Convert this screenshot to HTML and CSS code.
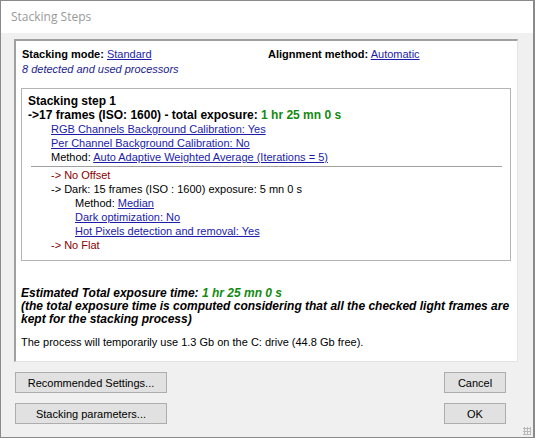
FILE: index.html
```html
<!DOCTYPE html>
<html lang="en">
<head>
    <meta charset="UTF-8">
    <title>Stacking Steps</title>
    <link rel="stylesheet" href="styles.css">
</head>
<body>
<div class="window">
    <header class="titlebar">Stacking Steps</header>

    <div class="client">
        <section class="panel">
            <div class="top-row">
                <div class="col-left">
                    <div><b>Stacking mode:</b> <a href="#">Standard</a></div>
                    <div class="procs">8 detected and used processors</div>
                </div>
                <div class="col-right">
                    <b>Alignment method:</b> <a href="#">Automatic</a>
                </div>
            </div>

            <article class="step">
                <h3>Stacking step 1</h3>
                <div class="frames">-&gt;17 frames (ISO: 1600) - total exposure: <span class="green">1 hr 25 mn 0 s</span></div>
                <div class="ind1"><a href="#">RGB Channels Background Calibration: Yes</a></div>
                <div class="ind1"><a href="#">Per Channel Background Calibration: No</a></div>
                <div class="ind1">Method: <a href="#">Auto Adaptive Weighted Average (Iterations = 5)</a></div>
                <hr>
                <div class="ind1 red">-&gt; No Offset</div>
                <div class="ind1">-&gt; Dark: 15 frames (ISO : 1600) exposure: 5 mn 0 s</div>
                <div class="ind2">Method: <a href="#">Median</a></div>
                <div class="ind2"><a href="#">Dark optimization: No</a></div>
                <div class="ind2"><a href="#">Hot Pixels detection and removal: Yes</a></div>
                <div class="ind1 red">-&gt; No Flat</div>
            </article>

            <div class="estimate">
                <div>Estimated Total exposure time: <span class="green">1 hr 25 mn 0 s</span></div>
                <div>(the total exposure time is computed considering that all the checked light frames are kept for the stacking process)</div>
            </div>

            <p class="disk">The process will temporarily use 1.3 Gb on the C: drive (44.8 Gb free).</p>
        </section>

        <div class="buttons">
            <div class="btn-col">
                <button class="btn wide">Recommended Settings...</button>
                <button class="btn wide">Stacking parameters...</button>
            </div>
            <div class="btn-col">
                <button class="btn small">Cancel</button>
                <button class="btn small">OK</button>
            </div>
        </div>
        <div class="grip"></div>
    </div>
</div>
</body>
</html>
```

FILE: styles.css
```css
html, body {
    margin: 0;
    padding: 0;
}

body {
    font-family: "Liberation Sans", Arial, sans-serif;
    font-size: 11px;
    color: #000;
    background: #fff;
}

.window {
    width: 535px;
    height: 438px;
    box-sizing: border-box;
    border: 1px solid #8a8a8a;
    border-right: 2px solid #8a8a8a;
    background: #f0f0f0;
    display: flex;
    flex-direction: column;
}

.titlebar {
    height: 32px;
    background: #fff;
    color: #9a9a9a;
    font-family: "Open Sans", "Liberation Sans", sans-serif;
    font-size: 12px;
    padding-left: 10px;
    line-height: 32px;
}

.client {
    flex: 1;
    padding: 6px 15px 0 13px;
    position: relative;
}

.panel {
    height: 323px;
    box-sizing: border-box;
    background: #fff;
    border-top: 2px solid #a0a0a0;
    border-left: 2px solid #a0a0a0;
    border-right: 1px solid #e3e3e3;
    border-bottom: 1px solid #e3e3e3;
    padding: 6px 6px 0 5px;
}

a {
    color: #1c1ca8;
    text-decoration: underline;
}

.top-row {
    display: flex;
    line-height: 15px;
    padding-left: 1px;
}

.col-left {
    width: 246px;
}

.procs {
    font-style: italic;
    color: #1c1c8c;
}

.step {
    margin-top: 11px;
    border: 1px solid #b4b4b4;
    padding: 5px 6px 8px 6px;
    line-height: 14px;
}

.step h3 {
    margin: 0;
    font-size: 12px;
    line-height: 14px;
}

.frames {
    font-weight: bold;
    font-size: 12px;
    line-height: 14px;
}

.green {
    color: #128a12;
}

.ind1 {
    padding-left: 23px;
}

.ind2 {
    padding-left: 47px;
}

.red {
    color: #8c0000;
}

.step hr {
    margin: 2px 2px 1px 3px;
    border: 0;
    border-top: 1px solid #a0a0a0;
}

.estimate {
    margin-top: 26px;
    font-weight: bold;
    font-style: italic;
    font-size: 12px;
    line-height: 13px;
}

.disk {
    margin: 9px 0 0 0;
    line-height: 14px;
}

.buttons {
    display: flex;
    justify-content: space-between;
    padding: 10px 12px 0 1px;
}

.btn-col {
    display: flex;
    flex-direction: column;
    gap: 10px;
}

.btn {
    height: 21px;
    background: #e1e1e1;
    border: 1px solid #adadad;
    font-family: "Liberation Sans", Arial, sans-serif;
    font-size: 11px;
    color: #000;
    padding: 0;
}

.wide {
    width: 152px;
}

.small {
    width: 62px;
}

.grip {
    position: absolute;
    right: 2px;
    bottom: 2px;
    width: 8px;
    height: 8px;
    background-image: radial-gradient(circle, #b8b8b8 1px, transparent 1.2px);
    background-size: 3px 3px;
}
```
